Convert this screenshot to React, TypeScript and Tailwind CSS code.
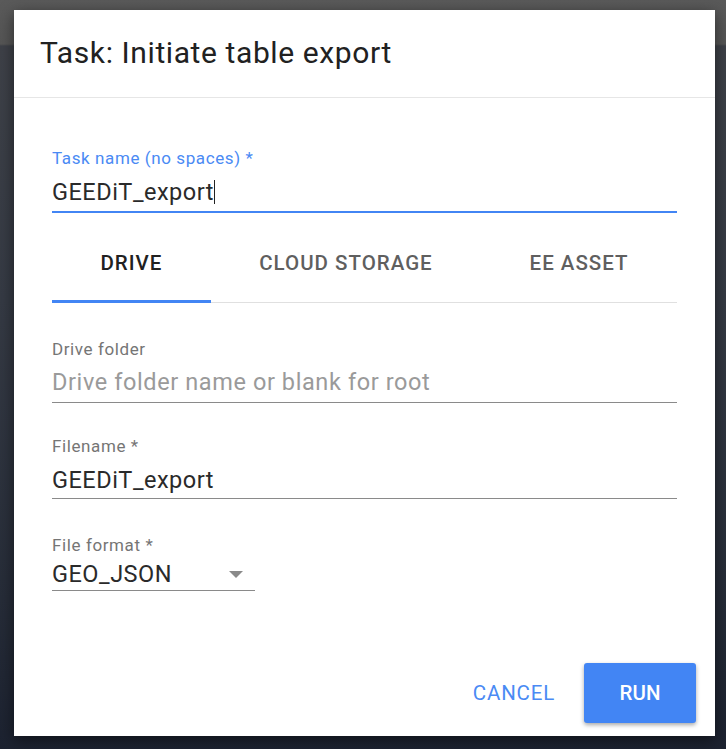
export default function App() {
  return (
    <div className="h-[749px] w-[726px] overflow-hidden bg-[linear-gradient(180deg,#5a5a5a_0px,#555_44px,#3e4148_46px,#353a44_300px,#262c38_600px,#1c2230_749px)] pl-[14px] pt-[10px] font-['Roboto',sans-serif]">
      <div className="flex h-[726px] w-[701px] flex-col bg-white shadow-[0_4px_14px_rgba(0,0,0,0.5)]">
        {/* Header */}
        <div className="h-[88px] border-b border-[#e6e6e6] px-[26px] pt-[27px]">
          <h1 className="text-[30px] leading-8 tracking-[0.6px] text-[#212121]">Task: Initiate table export</h1>
        </div>

        <div className="flex flex-1 flex-col px-[38px]">
          {/* Task name */}
          <div className="mt-[50px]">
            <label className="block text-[17px] leading-5 tracking-[0.6px] text-[#4a8af4]">Task name (no spaces) *</label>
            <div className="mt-[10px] flex items-center border-b-2 border-[#4285f4] pb-[5px] text-[23.5px] leading-7 tracking-[0.5px] text-[#2a2a2a]">
              GEEDiT_export
              <span className="inline-block h-[24px] w-px bg-[#222]"></span>
            </div>
          </div>

          {/* Tabs */}
          <div className="mt-[26px] flex border-b border-[#e0e0e0]">
            <button className="-mb-px flex-grow border-b-[3px] border-[#4285f4] px-[47px] pb-[25px] pt-3 text-[20.5px] leading-6 font-medium tracking-[1px] text-[#212121]">
              DRIVE
            </button>
            <button className="-mb-px flex-grow border-b-[3px] border-transparent px-[47px] pb-[25px] pt-3 text-[20.5px] leading-6 font-medium tracking-[1px] text-[#5f5f5f]">
              CLOUD STORAGE
            </button>
            <button className="-mb-px flex-grow border-b-[3px] border-transparent px-[47px] pb-[25px] pt-3 text-[20.5px] leading-6 font-medium tracking-[1px] text-[#5f5f5f]">
              EE ASSET
            </button>
          </div>

          {/* Drive folder */}
          <div className="mt-[36px]">
            <label className="block text-[17px] leading-5 tracking-[0.6px] text-[#757575]">Drive folder</label>
            <div className="mt-[9px] border-b border-[#8a8a8a] pb-[6px] text-[23.5px] leading-7 tracking-[0.6px] text-[#9a9a9a]">
              Drive folder name or blank for root
            </div>
          </div>

          {/* Filename */}
          <div className="mt-[33px]">
            <label className="block text-[17px] leading-5 tracking-[0.6px] text-[#757575]">Filename *</label>
            <div className="mt-[10px] border-b border-[#8a8a8a] pb-[4px] text-[23.5px] leading-7 tracking-[0.5px] text-[#2a2a2a]">
              GEEDiT_export
            </div>
          </div>

          {/* File format */}
          <div className="mt-[36px]">
            <label className="block text-[17px] leading-5 tracking-[0.6px] text-[#757575]">File format *</label>
            <div className="mt-[5px] flex w-[203px] items-center justify-between border-b border-[#8a8a8a] pb-[2px] text-[23.5px] leading-7 tracking-[0.5px] text-[#2a2a2a]">
              <span>GEO_JSON</span>
              <span className="mr-[12px] h-0 w-0 border-x-[7px] border-t-[7px] border-x-transparent border-t-[#8a8a8a]"></span>
            </div>
          </div>
        </div>

        {/* Actions */}
        <div className="flex items-center justify-end gap-[18px] pb-[13px] pr-[19px]">
          <button className="px-[11px] text-[20.5px] leading-6 tracking-[0.8px] text-[#4a8af4]">CANCEL</button>
          <button className="h-[60px] w-[112px] rounded-[3px] bg-[#4285f4] text-[20.5px] leading-6 font-medium text-white shadow-[0_2px_4px_rgba(0,0,0,0.35)]">
            RUN
          </button>
        </div>
      </div>
    </div>
  )
}
